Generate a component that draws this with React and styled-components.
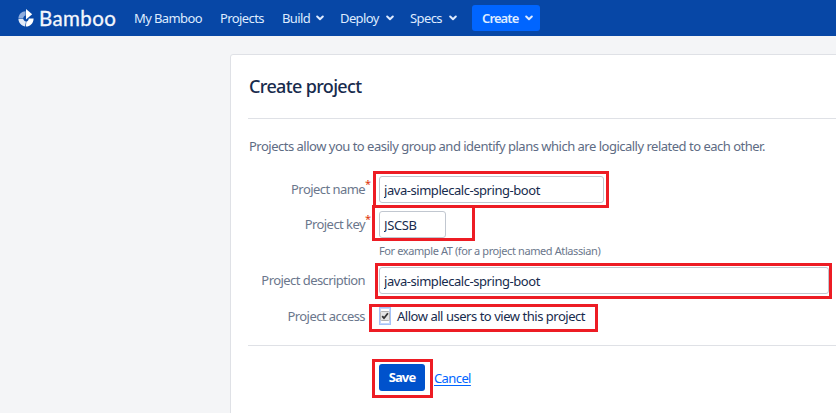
import React from "react";
import styled, { createGlobalStyle } from "styled-components";

const GlobalStyle = createGlobalStyle`
  * { box-sizing: border-box; }
  body {
    margin: 0;
    background: #f4f5f7;
    font-family: "Noto Sans", "Open Sans", sans-serif;
    font-size: 13px;
    color: #172b4d;
    overflow: hidden;
  }
`;

const Page = styled.div`
  display: flex;
  flex-direction: column;
  height: 413px;
  overflow: hidden;
`;

const Header = styled.header`
  display: flex;
  align-items: center;
  flex: none;
  height: 36px;
  padding-left: 18px;
  background: #0747a6;
  color: #deebff;
`;

const Brand = styled.div`
  display: flex;
  align-items: center;
  width: 116px;
  color: #f4f7fc;
`;

const LogoIcon = styled.svg`
  flex: none;
  width: 16px;
  height: 18px;
  margin-right: 5px;
`;

const BrandName = styled.span`
  font-family: Lato, sans-serif;
  font-size: 20.5px;
  line-height: 36px;
  letter-spacing: 0.4px;
  -webkit-text-stroke: 0.3px currentColor;
`;

const NavItem = styled.a`
  display: flex;
  align-items: center;
  justify-content: space-between;
  flex: none;
  width: ${(p) => p.$width}px;
  margin-right: ${(p) => p.$gap}px;
  line-height: 36px;
  letter-spacing: -0.6px;
  white-space: nowrap;
`;

const CreateButton = styled.button`
  display: flex;
  align-items: center;
  justify-content: space-between;
  width: 68px;
  height: 26px;
  padding: 0 7px 0 10px;
  border: 0;
  border-radius: 3px;
  background: #0065ff;
  color: #deebff;
  font: 600 13px "Noto Sans", sans-serif;
  letter-spacing: -0.9px;
`;

const ChevronIcon = styled.svg`
  width: 8px;
  height: 6px;
  fill: none;
  stroke: currentColor;
  stroke-width: 2;
  stroke-linecap: round;
  stroke-linejoin: round;
`;

const Panel = styled.main`
  flex: 1;
  margin: 18px -10px -10px 230px;
  padding: 0 0 0 17px;
  border: 1px solid #dfe1e6;
  border-radius: 3px;
  background: #fff;
`;

const Title = styled.h1`
  height: 64px;
  margin: 0;
  padding-left: 1px;
  border-bottom: 1px solid #dfe1e6;
  font-size: 18px;
  font-weight: 500;
  line-height: 63px;
  letter-spacing: -0.65px;
`;

const Intro = styled.p`
  height: 57px;
  margin: 0;
  padding-left: 1px;
  color: #5e6c84;
  line-height: 55px;
  letter-spacing: -0.5px;
  white-space: nowrap;
`;

const Row = styled.div`
  display: flex;
  height: ${(p) => p.$height}px;
`;

const Label = styled.label`
  position: relative;
  flex: none;
  width: 117px;
  margin-right: 14px;
  color: #6b778c;
  line-height: 26px;
  letter-spacing: -0.56px;
  text-align: right;
  white-space: nowrap;
`;

const Required = styled.span`
  position: absolute;
  left: 100%;
  top: -5px;
  color: #de350b;
  font-size: 11px;
`;

const Control = styled.div`
  flex: none;
`;

const Field = styled.div`
  position: relative;
  width: fit-content;
`;

const TextInput = styled.input`
  display: block;
  width: ${(p) => p.$width}px;
  height: 27px;
  padding: 1px 4px 0;
  border: 1px solid #c1c7d0;
  border-radius: 3px;
  outline: 0;
  background: #fff;
  color: #172b4d;
  font: 13px "Noto Sans", sans-serif;
  letter-spacing: ${(p) => p.$track}px;
`;

const Hint = styled.div`
  color: #6b778c;
  font-size: 11px;
  line-height: 26px;
  letter-spacing: -0.4px;
  white-space: nowrap;
`;

const Highlight = styled.span`
  position: absolute;
  inset: ${(p) => p.$inset};
  border: 3px solid #ed1c24;
  pointer-events: none;
`;

const CheckLine = styled.label`
  display: flex;
  align-items: center;
  height: 26px;
  letter-spacing: -0.47px;
  white-space: nowrap;
`;

const CheckFocus = styled.span`
  display: flex;
  align-items: center;
  justify-content: center;
  width: 12px;
  height: 18px;
  margin-right: 6px;
  border: 1px solid #a4c2f7;
  box-shadow: inset 0 0 0 1px #c3d6fa;
`;

const CheckIcon = styled.svg`
  flex: none;
  width: 10px;
  height: 10px;
`;

const Actions = styled.footer`
  display: flex;
  align-items: center;
  height: 63px;
  padding-left: 131px;
  border-top: 1px solid #dfe1e6;
`;

const SaveButton = styled.button`
  display: block;
  width: 46px;
  height: 27px;
  padding: 0;
  border: 0;
  border-radius: 3px;
  background: #0052cc;
  color: #fff;
  font: 700 13px "Noto Sans", sans-serif;
  letter-spacing: -0.9px;
`;

const CancelLink = styled.a`
  margin: 2px 0 0 9px;
  color: #0065ff;
  letter-spacing: -0.6px;
  text-decoration: underline;
  text-underline-offset: 2px;
`;

const Chevron = () => (
  <ChevronIcon viewBox="0 0 8 6">
    <path d="M1.2 1.5 4 4.2 6.8 1.5" />
  </ChevronIcon>
);

const menu = [
  { label: "My Bamboo", width: 68, gap: 18 },
  { label: "Projects", width: 44, gap: 18 },
  { label: "Build", width: 42, gap: 16, arrow: true },
  { label: "Deploy", width: 54, gap: 16, arrow: true },
  { label: "Specs", width: 47, gap: 15, arrow: true },
];

export default function App() {
  return (
    <Page>
      <GlobalStyle />
      <Header>
        <Brand>
          <LogoIcon viewBox="0 0 16 18">
            <path d="M8 0 14.2 5.2 8 10.4Z" fill="#fff" />
            <path d="M7.6 2.2C3.6 2.4 0.7 5.2 0.4 9.2H5.2C5.4 7.8 6.3 6.8 7.6 6.5Z" fill="#8fadde" />
            <path d="M0.4 9.8H5.2C5.5 11.3 6.5 12.4 8 12.4L7 17.4C3.2 16.8 0.5 13.8 0.4 9.8Z" fill="#e1eaf7" />
            <path d="M10.8 9.4H15.6C15.5 14.2 12.2 17.6 7.8 17.5L8.4 12.4C9.8 12.2 10.7 11 10.8 9.4Z" fill="#fff" />
          </LogoIcon>
          <BrandName>Bamboo</BrandName>
        </Brand>
        {menu.map((item) => (
          <NavItem key={item.label} $width={item.width} $gap={item.gap}>
            {item.label}
            {item.arrow && <Chevron />}
          </NavItem>
        ))}
        <CreateButton>
          Create
          <Chevron />
        </CreateButton>
      </Header>
      <Panel>
        <Title>Create project</Title>
        <Intro>
          Projects allow you to easily group and identify plans which are logically related to each other.
        </Intro>
        <Row $height={35}>
          <Label>
            Project name<Required>*</Required>
          </Label>
          <Control>
            <Field>
              <TextInput $width={225} $track={-0.45} defaultValue="java-simplecalc-spring-boot" />
              <Highlight $inset="-5px -5px -5px -6px" />
            </Field>
          </Control>
        </Row>
        <Row $height={56}>
          <Label>
            Project key<Required>*</Required>
          </Label>
          <Control>
            <Field>
              <TextInput $width={67} $track={-0.4} defaultValue="JSCSB" />
              <Highlight $inset="-6px -29px -3px -7px" />
            </Field>
            <Hint>For example AT (for a project named Atlassian)</Hint>
          </Control>
        </Row>
        <Row $height={36}>
          <Label>Project description</Label>
          <Control>
            <Field>
              <TextInput $width={450} $track={-0.45} defaultValue="java-simplecalc-spring-boot" />
              <Highlight $inset="-4px -3px -5px -4px" />
            </Field>
          </Control>
        </Row>
        <Row $height={42}>
          <Label>Project access</Label>
          <Control>
            <Field>
              <CheckLine>
                <CheckFocus>
                  <CheckIcon viewBox="0 0 10 10">
                    <rect x="0.5" y="0.5" width="9" height="9" rx="1" fill="#e4e4e4" stroke="#b5b5b5" />
                    <path d="M2.2 5.2 4 7.2 7.9 2.3" fill="none" stroke="#333" strokeWidth="1.8" />
                  </CheckIcon>
                </CheckFocus>
                Allow all users to view this project
              </CheckLine>
              <Highlight $inset="1px -13px -3px -10px" />
            </Field>
          </Control>
        </Row>
        <Actions>
          <Field>
            <SaveButton>Save</SaveButton>
            <Highlight $inset="-5px -8px -7px -7px" />
          </Field>
          <CancelLink>Cancel</CancelLink>
        </Actions>
      </Panel>
    </Page>
  );
}
